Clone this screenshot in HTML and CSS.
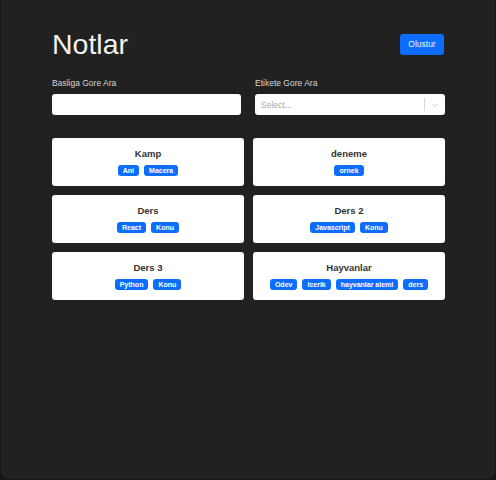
FILE: index.html
```html
<!DOCTYPE html>
<html>
<head>
<meta charset="utf-8">
<link rel="stylesheet" href="styles.css">
</head>
<body>
<div class="window">
  <div class="container">
    <header class="top">
      <h1 class="title">Notlar</h1>
      <button class="btn">Olustur</button>
    </header>
    <div class="filters">
      <div class="field">
        <label class="label">Basliga Gore Ara</label>
        <input class="input" type="text">
      </div>
      <div class="field">
        <label class="label">Etikete Gore Ara</label>
        <div class="select">
          <span class="placeholder">Select...</span>
          <span class="sep"></span>
          <svg class="chev" width="8" height="8" viewBox="0 0 8 8"><path d="M1.5 3 L4 5.5 L6.5 3" fill="none" stroke="#c8c8c8" stroke-width="1"/></svg>
        </div>
      </div>
    </div>
    <div class="grid">
      <div class="card"><div class="card-title">Kamp</div><div class="tags"><span class="tag">Ani</span><span class="tag">Macera</span></div></div>
      <div class="card"><div class="card-title">deneme</div><div class="tags"><span class="tag">ornek</span></div></div>
      <div class="card"><div class="card-title">Ders</div><div class="tags"><span class="tag">React</span><span class="tag">Konu</span></div></div>
      <div class="card"><div class="card-title">Ders 2</div><div class="tags"><span class="tag">Javascript</span><span class="tag">Konu</span></div></div>
      <div class="card"><div class="card-title">Ders 3</div><div class="tags"><span class="tag">Python</span><span class="tag">Konu</span></div></div>
      <div class="card"><div class="card-title">Hayvanlar</div><div class="tags"><span class="tag">Odev</span><span class="tag">Icerik</span><span class="tag">hayvanlar alemi</span><span class="tag">ders</span></div></div>
    </div>
  </div>
</div>
</body>
</html>
```

FILE: styles.css
```css
* { box-sizing: border-box; }
html, body { margin: 0; padding: 0; background: #161616; }
body { font-family: "Liberation Sans", Arial, sans-serif; }
.window {
  width: 494px;
  height: 479px;
  margin-left: 1px;
  background: #212121;
  border-radius: 0 0 8px 8px;
  padding: 26px 51px 0 51px;
}
.top {
  display: flex;
  justify-content: space-between;
  align-items: center;
  height: 36px;
}
.title {
  margin: 0;
  font-size: 28.5px;
  font-weight: 400;
  color: #f2f2f2;
  line-height: 36px;
}
.btn {
  background: #0d6efd;
  color: #e8f0ff;
  border: none;
  border-radius: 3px;
  width: 44px;
  height: 21px;
  font-family: "Liberation Sans", Arial, sans-serif;
  font-size: 8.5px;
  padding: 0;
  margin-top: 0;
}
.filters {
  display: grid;
  grid-template-columns: 189px 190px;
  column-gap: 14px;
  margin-top: 15px;
}
.field { display: flex; flex-direction: column; }
.label {
  font-size: 8.5px;
  color: #d6d6d6;
  line-height: 12px;
  margin-bottom: 5px;
}
.input {
  height: 21px;
  border: none;
  border-radius: 3px;
  background: #fff;
  margin: 0;
  padding: 0;
}
.select {
  height: 21px;
  background: #fff;
  border-radius: 3px;
  display: flex;
  align-items: center;
  padding-left: 6px;
}
.placeholder {
  flex: 1;
  font-size: 8.5px;
  color: #a8a8a8;
}
.sep {
  width: 1px;
  height: 13px;
  background: #d8d8d8;
}
.chev { margin: 0 6px 0 6px; }
.grid {
  display: grid;
  grid-template-columns: 192px 192px;
  column-gap: 9px;
  row-gap: 9px;
  margin-top: 23px;
}
.card {
  background: #fff;
  border-radius: 3px;
  height: 48px;
  display: flex;
  flex-direction: column;
  align-items: center;
  padding-top: 10px;
}
.card-title {
  font-size: 9.5px;
  font-weight: 700;
  color: #333;
  line-height: 12px;
}
.tags {
  display: flex;
  gap: 5px;
  margin-top: 5px;
}
.tag {
  background: #0d6efd;
  color: #fff;
  font-size: 7px;
  font-weight: 700;
  height: 11px;
  line-height: 11px;
  padding: 0 5px;
  border-radius: 3px;
}
```
